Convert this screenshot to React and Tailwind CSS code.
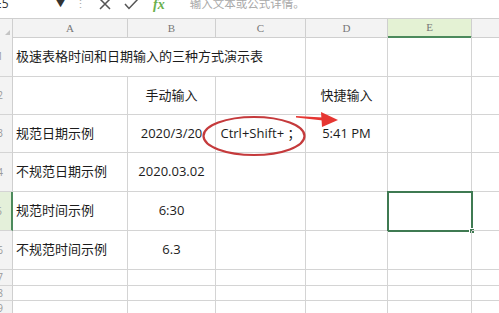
import React from 'react';

const cols = 'grid-cols-[13px_115px_88px_90px_82px_84px_1fr]';
const font = "font-['Open_Sans','Noto_Sans_CJK_SC',sans-serif]";

const rows = [
    { n: '1', h: 'h-[40px]', title: '极速表格时间和日期输入的三种方式演示表' },
    { n: '2', h: 'h-[38px]', cells: ['', '手动输入', '', '快捷输入', '', ''] },
    { n: '3', h: 'h-[38px]', cells: ['规范日期示例', '2020/3/20', 'Ctrl+Shift+ ；', '5:41 PM', '', ''] },
    { n: '4', h: 'h-[39px]', cells: ['不规范日期示例', '2020.03.02', '', '', '', ''] },
    { n: '5', h: 'h-[39px]', cells: ['规范时间示例', '6:30', '', '', '', ''], active: true },
    { n: '6', h: 'h-[39px]', cells: ['不规范时间示例', '6.3', '', '', '', ''] },
    { n: '7', h: 'h-[16px]', cells: ['', '', '', '', '', ''] },
    { n: '8', h: 'h-[15px]', cells: ['', '', '', '', '', ''] },
    { n: '9', h: 'h-[15px]', cells: ['', '', '', '', '', ''] },
];

const RowHead = ({ n, active }) => (
    <div className={`overflow-hidden flex items-center justify-end pr-[9px] text-[10px] text-[#9a9a9a] border-b border-[#d4d4d4] ${active ? 'bg-[#e4f0da] border-r-2 border-r-[#4c8a5c]' : 'bg-[#f3f3f3] border-r border-r-[#cfcfcf]'}`}>
        {n}
    </div>
);

const App = () => {
    return (
        <div className={`relative w-[499px] h-[313px] overflow-hidden bg-white ${font}`}>
            {/* formula bar, cropped at the top */}
            <div className="h-[18px] overflow-hidden">
                <div className="flex items-center h-[20px] -mt-[6px] text-[#555]">
                    <span className="w-[50px] -ml-[5px] text-[12px] text-[#333]">E5</span>
                    <span className="w-[21px] text-[9px] text-[#333] pl-[11px]">▼</span>
                    <span className="w-[30px] text-[11px] text-[#aaa] pl-[9px]">⋮</span>
                    <svg width="12" height="12" viewBox="0 0 12 12" className="ml-[3px]">
                        <path d="M1 1 L11 11 M11 1 L1 11" stroke="#555" strokeWidth="1.5" fill="none" />
                    </svg>
                    <svg width="15" height="12" viewBox="0 0 15 12" className="ml-[13px]">
                        <path d="M1 6 L5 10.5 L14 1" stroke="#555" strokeWidth="1.5" fill="none" />
                    </svg>
                    <span className="ml-[14px] text-[14px] italic font-bold text-[#6ab04c] font-['Liberation_Serif',serif]">fx</span>
                    <span className="ml-[25px] text-[11.5px] text-[#a8a8a8]">输入文本或公式详情。</span>
                </div>
            </div>

            {/* column header */}
            <div className={`grid ${cols} h-[19px] border-t border-[#cfcfcf] text-[11px] text-[#777] font-['Liberation_Serif',serif]`}>
                <div className="bg-[#f3f3f3] border-r border-b border-[#cfcfcf] flex items-end justify-end pr-[2px] pb-[2px]">
                    <div className="w-0 h-0 border-l-[5px] border-l-transparent border-b-[5px] border-b-[#c4c4c4]" />
                </div>
                {['A', 'B', 'C', 'D'].map((c) => (
                    <div key={c} className="bg-[#f3f3f3] border-r border-b border-[#cfcfcf] flex items-center justify-center">{c}</div>
                ))}
                <div className="bg-[#e4f2d4] border-r border-[#cfcfcf] border-b-2 border-b-[#4c8a5c] flex items-center justify-center">E</div>
                <div className="bg-[#f3f3f3] border-b border-[#cfcfcf]" />
            </div>

            {/* rows */}
            {rows.map((r) => (
                <div key={r.n} className={`grid ${cols} ${r.h} text-[13px] text-[#1c1c1c]`}>
                    <RowHead n={r.n} active={r.active} />
                    {r.title ? (
                        <>
                            <div className="col-span-3 flex items-center pl-[3px] whitespace-nowrap border-r border-b border-[#d4d4d4]">{r.title}</div>
                            <div className="border-r border-b border-[#d4d4d4]" />
                            <div className="border-r border-b border-[#d4d4d4]" />
                            <div className="border-b border-[#d4d4d4]" />
                        </>
                    ) : (
                        r.cells.map((c, i) => (
                            <div
                                key={i}
                                className={`relative flex items-center whitespace-pre border-b border-[#d4d4d4] ${i < 5 ? 'border-r' : ''} ${i === 0 ? 'pl-[3px]' : 'justify-center'}`}
                            >
                                {c}
                                {r.active && i === 4 && (
                                    <div className="absolute -left-px -top-px w-[86px] h-[41px] border-2 border-[#3f7a52]">
                                        <div className="absolute -right-[4px] -bottom-[4px] w-[6px] h-[6px] bg-[#3f7a52] border border-white" />
                                    </div>
                                )}
                            </div>
                        ))
                    )}
                </div>
            ))}

            {/* annotation: ellipse and arrow */}
            <svg className="absolute left-0 top-0 pointer-events-none" width="499" height="313" viewBox="0 0 499 313">
                <ellipse cx="254" cy="136" rx="50.5" ry="19" fill="none" stroke="#c53a3c" strokeWidth="2.2" />
                <polygon points="296,116 323,117.5 323,120.5 296,117.5" fill="#e63632" />
                <polygon points="321,112 338,120 322,127" fill="#e63632" />
            </svg>
        </div>
    );
};

export default App;
